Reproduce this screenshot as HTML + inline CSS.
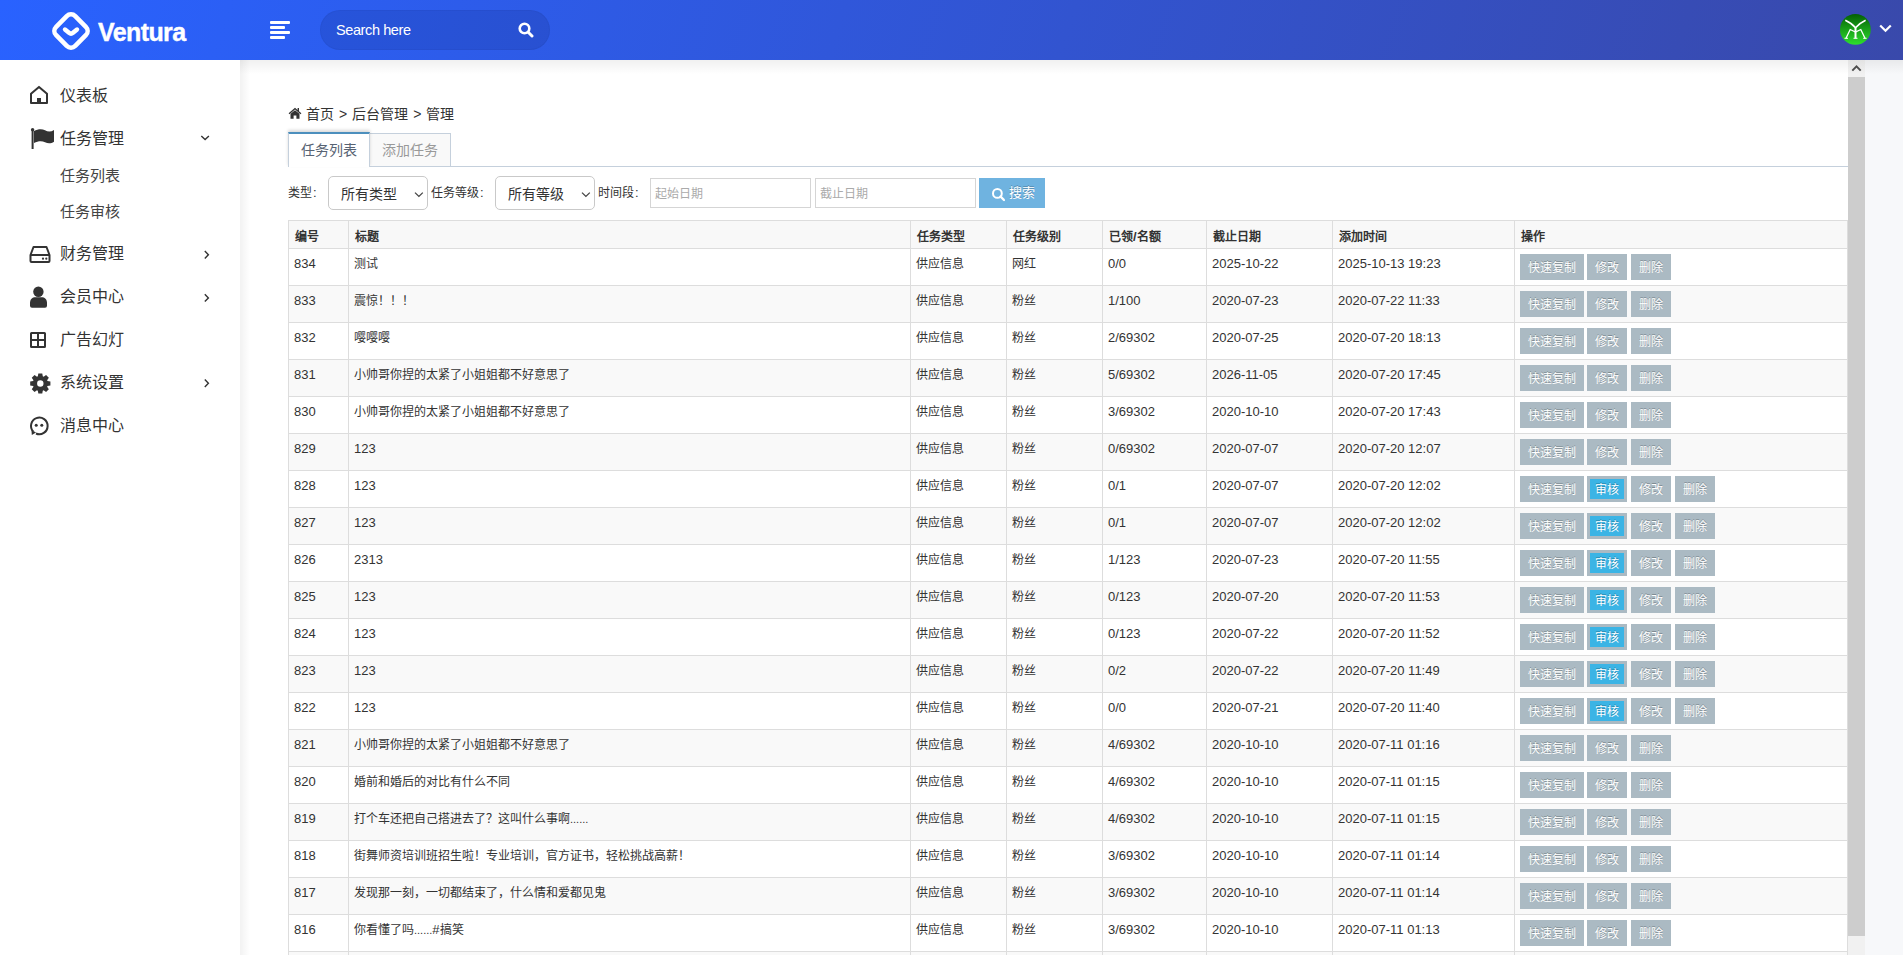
<!DOCTYPE html>
<html lang="zh-CN"><head><meta charset="utf-8"><title>Ventura</title>
<style>
*{margin:0;padding:0;box-sizing:content-box}
html,body{width:1903px;height:955px;overflow:hidden}
body{position:relative;font-family:"Liberation Sans",sans-serif;background:#f7f8fa;color:#333}
.c{font-size:12px}
.header{position:absolute;left:0;top:0;width:1903px;height:60px;background:linear-gradient(108deg,#2962ff 0%,#3949ab 100%);z-index:5}
.hshadow{position:absolute;left:240px;top:60px;width:1663px;height:14px;background:linear-gradient(180deg,rgba(0,0,0,.06),rgba(0,0,0,0));z-index:4}
.sidebar{position:absolute;left:0;top:60px;width:240px;height:895px;background:#fff;z-index:3}
.sshadow{position:absolute;left:240px;top:60px;width:10px;height:895px;background:linear-gradient(90deg,rgba(0,0,0,.05),rgba(0,0,0,0));z-index:4}
.frame{position:absolute;left:240px;top:60px;width:1608px;height:895px;background:#fff;overflow:hidden;z-index:1}
.sb{position:absolute;left:1848px;top:60px;width:17px;height:895px;background:#f1f1f1;z-index:2}
.sbthumb{position:absolute;left:0;top:17px;width:17px;height:859px;background:#cdcdcd}
.sbup{position:absolute;left:0;top:0;width:17px;height:17px}
.logo{position:absolute;left:52px;top:12px}
.brand{position:absolute;left:98px;top:20px;font-size:25px;line-height:25px;font-weight:bold;color:#fff;letter-spacing:-0.6px;-webkit-text-stroke:0.4px #fff}
.ham{position:absolute;left:270px;top:21px;width:20px;height:18px}
.ham i{position:absolute;left:0;height:3px;background:#fff;border-radius:1px}
.search{position:absolute;left:320px;top:10px;width:230px;height:40px;border-radius:20px;background:rgba(0,0,30,.10);box-shadow:inset 0 0 0 1px rgba(0,0,40,.04)}
.search span{position:absolute;left:16px;top:12px;font-size:14.5px;line-height:17px;letter-spacing:-0.4px;color:#fff}
.avatar{position:absolute;left:1840px;top:14px;width:31px;height:31px;border-radius:50%;background:linear-gradient(180deg,#056305,#2bd92b)}
.nav{position:absolute;left:60px;font-size:16px;color:#333;line-height:20px}
.sub{position:absolute;left:60px;font-size:15px;color:#444;line-height:20px}
.ico{position:absolute;left:30px}
.crumb{position:absolute;left:66px;top:44px;font-size:14px;color:#333;line-height:20px}
.tab{position:absolute;height:33px;font-size:14px;line-height:33px;text-align:center;box-sizing:border-box}
.tline{position:absolute;left:48px;top:106px;width:1560px;height:1px;background:#c5d0dc}
.lbl{position:absolute;font-size:12px;color:#333;line-height:20px}
.sel{position:absolute;top:116px;height:32px;border:1px solid #c9c9c9;border-radius:5px;background:#fff}
.sel span{position:absolute;left:12px;top:7px;font-size:14px;color:#333;line-height:20px}
.inp{position:absolute;top:118px;height:28px;border:1px solid #d5d5d5;background:#fff}
.inp span{position:absolute;left:4px;top:5px;font-size:12px;color:#aaa;line-height:20px}
.sbtn{text-shadow:0 -1px 0 rgba(0,0,0,.25);position:absolute;left:739px;top:118px;width:66px;height:30px;background:#6fb3e0;color:#fff}
.tbl{position:absolute}
.hdr{position:absolute;left:0;background:#f8f8f8;border-top:1px solid #ddd;box-sizing:border-box}
.hl{position:absolute;left:0;border-top:1px solid #ddd;border-bottom:1px solid #ddd;box-sizing:border-box}
.vl{position:absolute;top:0;width:1px;background:#ddd}
.th{position:absolute;font-weight:bold;font-size:13px;line-height:28px;color:#333;white-space:nowrap}
.td{position:absolute;font-size:13px;line-height:20px;padding-top:6px;color:#333;white-space:nowrap}
.btn{text-shadow:0 -1px 0 rgba(0,0,0,.25);position:absolute;height:19px;padding-top:1px;line-height:20px;border:3px solid #abbac3;background:#abbac3;color:#fff;font-size:12px;text-align:center}
.btn.b2{background:#3bb4e5}
.col{font-size:13px;margin-left:1px}
.gt{margin:0 5px 0 5px}
.el{font-size:11px}

</style></head><body>
<div class="header">
  <svg class="logo" width="38" height="38" viewBox="0 0 38 38"><rect x="5.5" y="5.5" width="27" height="27" rx="6" transform="rotate(45 19 19)" fill="none" stroke="#fff" stroke-width="4.6"/><path d="M13 17.5 L17 20.8 Q19 22.5 21 20.8 L25 17.5" fill="none" stroke="#fff" stroke-width="4.4" stroke-linecap="round" stroke-linejoin="round"/></svg>
  <div class="brand">Ventura</div>
  <div class="ham"><i style="top:0;width:20px"></i><i style="top:5px;width:15px"></i><i style="top:10px;width:20px"></i><i style="top:15px;width:15px"></i></div>
  <div class="search"><span>Search here</span>
    <svg style="position:absolute;left:198px;top:12px" width="16" height="16" viewBox="0 0 16 16"><circle cx="6.5" cy="6.5" r="4.8" fill="none" stroke="#fff" stroke-width="2.6"/><path d="M10 10 L14 14" stroke="#fff" stroke-width="3" stroke-linecap="round"/></svg>
  </div>
  <svg style="position:absolute;left:1838px;top:12px" width="36" height="36" viewBox="1838 12 36 36"><defs><linearGradient id="ag" x1="0" y1="0" x2="0" y2="1"><stop offset="0" stop-color="#046004"/><stop offset="1" stop-color="#2ee02e"/></linearGradient></defs><circle cx="1855.4" cy="29.4" r="15.4" fill="url(#ag)"/><g fill="none" stroke="#fff" stroke-width="1.6" stroke-linecap="butt"><path d="M1845.3 20.3 Q1852 23.5 1855.5 27.8 Q1859 23.5 1865.6 20.3"/><path d="M1855.5 27.3 V38.3" stroke-width="2"/><path d="M1846 38.2 L1850.2 29.5 L1855.5 32 L1860.8 29.5 L1865 38.2" stroke-width="1.3"/><path d="M1844.5 38.3 H1848 M1853.5 38.3 H1857.5 M1863.2 38.3 H1866.6" stroke-width="1"/></g></svg>
  <svg style="position:absolute;left:1879px;top:24px" width="13" height="9" viewBox="0 0 13 9"><path d="M1.2 1.5 L6.5 6.8 L11.8 1.5" fill="none" stroke="#fff" stroke-width="2.2"/></svg>
</div>
<div class="sidebar">
  <svg style="position:absolute;left:0;top:0" width="240" height="500" viewBox="0 60 240 500">
    <g fill="none" stroke="#333" stroke-width="2" stroke-linejoin="round">
      <path d="M31 93.8 L39 86.9 L47 93.8 V103 H31 Z"/>
      <path d="M33.5 247 H46.5 L49.5 255 V261 Q49.5 262 48.5 262 H31.5 Q30.5 262 30.5 261 V255 Z"/>
      <path d="M30.5 255 H49.5"/>
      <rect x="31" y="333" width="14" height="14" rx="0.5"/>
      <path d="M38 333 V347 M31 340 H45"/>
      <path d="M33.2 431.5 A8.3 8.3 0 1 1 36 433.5"/>
    </g>
    <g fill="#333">
      <rect x="37" y="98" width="4" height="5"/>
      <rect x="31.6" y="129.5" width="2" height="19.5"/>
      <circle cx="32.6" cy="129.8" r="1.7"/>
      <path d="M34 131 C38 129, 42 128.8, 45 130.3 C48 132, 51 132, 54 130 L54 141.8 C51 143.8, 48 143.8, 45 142.3 C42 140.8, 38 141, 34 143 Z"/>
      <circle cx="43" cy="258.7" r="1.1"/><circle cx="46.3" cy="258.7" r="1.1"/>
      <circle cx="38.4" cy="291.8" r="5.2"/>
      <path d="M30 303 C30 299.2 32.3 297.2 35.5 297.2 H41.5 C44.7 297.2 47 299.2 47 303 V305.8 Q47 307.8 45 307.8 H32 Q30 307.8 30 305.8 Z"/>
      <circle cx="36.2" cy="425.3" r="1.5"/><circle cx="41.8" cy="425.3" r="1.5"/>
      <path d="M31.5 430 L31.8 435 L36 432.5 Z"/>
    </g>
    <g transform="translate(40.3 383.5)" fill="#333">
      <path fill-rule="evenodd" d="M-2.47 -7.19 L-1.97 -10.11 L1.97 -10.11 L2.47 -7.19 L3.33 -6.83 L5.76 -8.54 L8.54 -5.76 L6.83 -3.33 L7.19 -2.47 L10.11 -1.97 L10.11 1.97 L7.19 2.47 L6.83 3.33 L8.54 5.76 L5.76 8.54 L3.33 6.83 L2.47 7.19 L1.97 10.11 L-1.97 10.11 L-2.47 7.19 L-3.33 6.83 L-5.76 8.54 L-8.54 5.76 L-6.83 3.33 L-7.19 2.47 L-10.11 1.97 L-10.11 -1.97 L-7.19 -2.47 L-6.83 -3.33 L-8.54 -5.76 L-5.76 -8.54 L-3.33 -6.83 Z M3.2 0 A3.2 3.2 0 1 0 -3.2 0 A3.2 3.2 0 1 0 3.2 0 Z"/>
    </g>
    <g fill="none" stroke="#333" stroke-width="1.4">
      <path d="M201.3 136 L205.1 139.6 L208.9 136"/>
      <path d="M204.8 251 L208.4 254.7 L204.8 258.4"/>
      <path d="M204.8 294.2 L208.4 297.9 L204.8 301.6"/>
      <path d="M204.8 379.6 L208.4 383.3 L204.8 387"/>
    </g>
  </svg>

  <div class="nav" style="top:26px">仪表板</div>
  <div class="nav" style="top:69px">任务管理</div>
  <div class="sub" style="top:106px">任务列表</div>
  <div class="sub" style="top:142px">任务审核</div>
  <div class="nav" style="top:184px">财务管理</div>
  <div class="nav" style="top:227px">会员中心</div>
  <div class="nav" style="top:270px">广告幻灯</div>
  <div class="nav" style="top:313px">系统设置</div>
  <div class="nav" style="top:356px">消息中心</div>
</div>
<div class="sshadow"></div>
<div class="hshadow"></div>
<div class="frame">
  <svg style="position:absolute;left:48px;top:47px" width="14" height="12" viewBox="0 0 14 12"><path d="M7 0.8 L0.6 6.2 L1.5 7.2 L7 2.6 L12.5 7.2 L13.4 6.2 L11 4.2 V1 H9.6 V3 Z" fill="#333"/><path d="M2.5 6.8 L7 3.2 L11.5 6.8 V11.8 H8.4 V8.6 H5.6 V11.8 H2.5 Z" fill="#333"/></svg><div class="crumb">首页<span class="gt">&gt;</span>后台管理<span class="gt">&gt;</span>管理</div>
  <div class="tline"></div>
  <div class="tab" style="left:48px;top:72px;width:82px;border:1px solid #c5d0dc;border-top:2px solid #4c8fbd;border-bottom:0;background:#fff;color:#576373;height:35px;box-shadow:0 -2px 3px 0 rgba(0,0,0,.15);z-index:2">任务列表</div>
  <div class="tab" style="left:129px;top:73px;width:82px;border:1px solid #c5d0dc;border-bottom:0;background:#f9f9f9;color:#999">添加任务</div>
  <div class="lbl" style="left:48px;top:123px">类型<span class="col">:</span></div>
  <div class="sel" style="left:88px;width:98px"><span>所有类型</span><svg style="position:absolute;left:85px;top:14px" width="10" height="8" viewBox="0 0 10 8"><path d="M1 1.6 L4.9 5.4 L8.8 1.6" fill="none" stroke="#444" stroke-width="1.3"/></svg></div>
  <div class="lbl" style="left:191px;top:123px">任务等级<span class="col">:</span></div>
  <div class="sel" style="left:255px;width:98px"><span>所有等级</span><svg style="position:absolute;left:85px;top:14px" width="10" height="8" viewBox="0 0 10 8"><path d="M1 1.6 L4.9 5.4 L8.8 1.6" fill="none" stroke="#444" stroke-width="1.3"/></svg></div>
  <div class="lbl" style="left:358px;top:123px">时间段<span class="col">:</span></div>
  <div class="inp" style="left:410px;width:159px"><span>起始日期</span></div>
  <div class="inp" style="left:575px;width:159px"><span>截止日期</span></div>
  <div class="sbtn"><svg style="position:absolute;left:10px;top:8px" width="16" height="16" viewBox="0 0 16 16"><circle cx="8.4" cy="7.4" r="4.4" fill="none" stroke="#fff" stroke-width="2"/><path d="M11.5 10.5 L15 14" stroke="#fff" stroke-width="2.4" stroke-linecap="round"/></svg><span style="position:absolute;left:30px;top:5px;font-size:13px;line-height:20px">搜索</span></div>
  <div class="tbl" style="left:48px;top:160px;width:1560px;">
<div class="hdr" style="top:0;height:29px;width:1560px"></div>
<div class="hl" style="top:28px;width:1560px;height:38px;background:#fff"></div>
<div class="hl" style="top:65px;width:1560px;height:38px;background:#f9f9f9"></div>
<div class="hl" style="top:102px;width:1560px;height:38px;background:#fff"></div>
<div class="hl" style="top:139px;width:1560px;height:38px;background:#f9f9f9"></div>
<div class="hl" style="top:176px;width:1560px;height:38px;background:#fff"></div>
<div class="hl" style="top:213px;width:1560px;height:38px;background:#f9f9f9"></div>
<div class="hl" style="top:250px;width:1560px;height:38px;background:#fff"></div>
<div class="hl" style="top:287px;width:1560px;height:38px;background:#f9f9f9"></div>
<div class="hl" style="top:324px;width:1560px;height:38px;background:#fff"></div>
<div class="hl" style="top:361px;width:1560px;height:38px;background:#f9f9f9"></div>
<div class="hl" style="top:398px;width:1560px;height:38px;background:#fff"></div>
<div class="hl" style="top:435px;width:1560px;height:38px;background:#f9f9f9"></div>
<div class="hl" style="top:472px;width:1560px;height:38px;background:#fff"></div>
<div class="hl" style="top:509px;width:1560px;height:38px;background:#f9f9f9"></div>
<div class="hl" style="top:546px;width:1560px;height:38px;background:#fff"></div>
<div class="hl" style="top:583px;width:1560px;height:38px;background:#f9f9f9"></div>
<div class="hl" style="top:620px;width:1560px;height:38px;background:#fff"></div>
<div class="hl" style="top:657px;width:1560px;height:38px;background:#f9f9f9"></div>
<div class="hl" style="top:694px;width:1560px;height:38px;background:#fff"></div>
<div class="hl" style="top:731px;width:1560px;height:38px;background:#f9f9f9"></div>
<div class="vl" style="left:0px;height:769px"></div>
<div class="vl" style="left:60px;height:769px"></div>
<div class="vl" style="left:622px;height:769px"></div>
<div class="vl" style="left:718px;height:769px"></div>
<div class="vl" style="left:814px;height:769px"></div>
<div class="vl" style="left:918px;height:769px"></div>
<div class="vl" style="left:1044px;height:769px"></div>
<div class="vl" style="left:1226px;height:769px"></div>
<div class="vl" style="left:1559px;height:769px"></div>
<div class="th" style="left:7px;top:3px"><span class="c">编号</span></div>
<div class="th" style="left:67px;top:3px"><span class="c">标题</span></div>
<div class="th" style="left:629px;top:3px"><span class="c">任务类型</span></div>
<div class="th" style="left:725px;top:3px"><span class="c">任务级别</span></div>
<div class="th" style="left:821px;top:3px"><span class="c">已领</span>/<span class="c">名额</span></div>
<div class="th" style="left:925px;top:3px"><span class="c">截止日期</span></div>
<div class="th" style="left:1051px;top:3px"><span class="c">添加时间</span></div>
<div class="th" style="left:1233px;top:3px"><span class="c">操作</span></div>
<div class="td" style="left:6px;top:28px">834</div>
<div class="td" style="left:66px;top:28px"><span class="c">测试</span></div>
<div class="td" style="left:628px;top:28px"><span class="c">供应信息</span></div>
<div class="td" style="left:724px;top:28px"><span class="c">网红</span></div>
<div class="td" style="left:820px;top:28px">0/0</div>
<div class="td" style="left:924px;top:28px">2025-10-22</div>
<div class="td" style="left:1050px;top:28px">2025-10-13 19:23</div>
<div class="btn" style="left:1232px;top:34px;width:58px">快速复制</div>
<div class="btn" style="left:1299px;top:34px;width:34px">修改</div>
<div class="btn" style="left:1343px;top:34px;width:34px">删除</div>
<div class="td" style="left:6px;top:65px">833</div>
<div class="td" style="left:66px;top:65px"><span class="c">震惊！！！</span></div>
<div class="td" style="left:628px;top:65px"><span class="c">供应信息</span></div>
<div class="td" style="left:724px;top:65px"><span class="c">粉丝</span></div>
<div class="td" style="left:820px;top:65px">1/100</div>
<div class="td" style="left:924px;top:65px">2020-07-23</div>
<div class="td" style="left:1050px;top:65px">2020-07-22 11:33</div>
<div class="btn" style="left:1232px;top:71px;width:58px">快速复制</div>
<div class="btn" style="left:1299px;top:71px;width:34px">修改</div>
<div class="btn" style="left:1343px;top:71px;width:34px">删除</div>
<div class="td" style="left:6px;top:102px">832</div>
<div class="td" style="left:66px;top:102px"><span class="c">嘤嘤嘤</span></div>
<div class="td" style="left:628px;top:102px"><span class="c">供应信息</span></div>
<div class="td" style="left:724px;top:102px"><span class="c">粉丝</span></div>
<div class="td" style="left:820px;top:102px">2/69302</div>
<div class="td" style="left:924px;top:102px">2020-07-25</div>
<div class="td" style="left:1050px;top:102px">2020-07-20 18:13</div>
<div class="btn" style="left:1232px;top:108px;width:58px">快速复制</div>
<div class="btn" style="left:1299px;top:108px;width:34px">修改</div>
<div class="btn" style="left:1343px;top:108px;width:34px">删除</div>
<div class="td" style="left:6px;top:139px">831</div>
<div class="td" style="left:66px;top:139px"><span class="c">小帅哥你捏的太紧了小姐姐都不好意思了</span></div>
<div class="td" style="left:628px;top:139px"><span class="c">供应信息</span></div>
<div class="td" style="left:724px;top:139px"><span class="c">粉丝</span></div>
<div class="td" style="left:820px;top:139px">5/69302</div>
<div class="td" style="left:924px;top:139px">2026-11-05</div>
<div class="td" style="left:1050px;top:139px">2020-07-20 17:45</div>
<div class="btn" style="left:1232px;top:145px;width:58px">快速复制</div>
<div class="btn" style="left:1299px;top:145px;width:34px">修改</div>
<div class="btn" style="left:1343px;top:145px;width:34px">删除</div>
<div class="td" style="left:6px;top:176px">830</div>
<div class="td" style="left:66px;top:176px"><span class="c">小帅哥你捏的太紧了小姐姐都不好意思了</span></div>
<div class="td" style="left:628px;top:176px"><span class="c">供应信息</span></div>
<div class="td" style="left:724px;top:176px"><span class="c">粉丝</span></div>
<div class="td" style="left:820px;top:176px">3/69302</div>
<div class="td" style="left:924px;top:176px">2020-10-10</div>
<div class="td" style="left:1050px;top:176px">2020-07-20 17:43</div>
<div class="btn" style="left:1232px;top:182px;width:58px">快速复制</div>
<div class="btn" style="left:1299px;top:182px;width:34px">修改</div>
<div class="btn" style="left:1343px;top:182px;width:34px">删除</div>
<div class="td" style="left:6px;top:213px">829</div>
<div class="td" style="left:66px;top:213px">123</div>
<div class="td" style="left:628px;top:213px"><span class="c">供应信息</span></div>
<div class="td" style="left:724px;top:213px"><span class="c">粉丝</span></div>
<div class="td" style="left:820px;top:213px">0/69302</div>
<div class="td" style="left:924px;top:213px">2020-07-07</div>
<div class="td" style="left:1050px;top:213px">2020-07-20 12:07</div>
<div class="btn" style="left:1232px;top:219px;width:58px">快速复制</div>
<div class="btn" style="left:1299px;top:219px;width:34px">修改</div>
<div class="btn" style="left:1343px;top:219px;width:34px">删除</div>
<div class="td" style="left:6px;top:250px">828</div>
<div class="td" style="left:66px;top:250px">123</div>
<div class="td" style="left:628px;top:250px"><span class="c">供应信息</span></div>
<div class="td" style="left:724px;top:250px"><span class="c">粉丝</span></div>
<div class="td" style="left:820px;top:250px">0/1</div>
<div class="td" style="left:924px;top:250px">2020-07-07</div>
<div class="td" style="left:1050px;top:250px">2020-07-20 12:02</div>
<div class="btn" style="left:1232px;top:256px;width:58px">快速复制</div>
<div class="btn b2" style="left:1299px;top:256px;width:34px">审核</div>
<div class="btn" style="left:1343px;top:256px;width:34px">修改</div>
<div class="btn" style="left:1387px;top:256px;width:34px">删除</div>
<div class="td" style="left:6px;top:287px">827</div>
<div class="td" style="left:66px;top:287px">123</div>
<div class="td" style="left:628px;top:287px"><span class="c">供应信息</span></div>
<div class="td" style="left:724px;top:287px"><span class="c">粉丝</span></div>
<div class="td" style="left:820px;top:287px">0/1</div>
<div class="td" style="left:924px;top:287px">2020-07-07</div>
<div class="td" style="left:1050px;top:287px">2020-07-20 12:02</div>
<div class="btn" style="left:1232px;top:293px;width:58px">快速复制</div>
<div class="btn b2" style="left:1299px;top:293px;width:34px">审核</div>
<div class="btn" style="left:1343px;top:293px;width:34px">修改</div>
<div class="btn" style="left:1387px;top:293px;width:34px">删除</div>
<div class="td" style="left:6px;top:324px">826</div>
<div class="td" style="left:66px;top:324px">2313</div>
<div class="td" style="left:628px;top:324px"><span class="c">供应信息</span></div>
<div class="td" style="left:724px;top:324px"><span class="c">粉丝</span></div>
<div class="td" style="left:820px;top:324px">1/123</div>
<div class="td" style="left:924px;top:324px">2020-07-23</div>
<div class="td" style="left:1050px;top:324px">2020-07-20 11:55</div>
<div class="btn" style="left:1232px;top:330px;width:58px">快速复制</div>
<div class="btn b2" style="left:1299px;top:330px;width:34px">审核</div>
<div class="btn" style="left:1343px;top:330px;width:34px">修改</div>
<div class="btn" style="left:1387px;top:330px;width:34px">删除</div>
<div class="td" style="left:6px;top:361px">825</div>
<div class="td" style="left:66px;top:361px">123</div>
<div class="td" style="left:628px;top:361px"><span class="c">供应信息</span></div>
<div class="td" style="left:724px;top:361px"><span class="c">粉丝</span></div>
<div class="td" style="left:820px;top:361px">0/123</div>
<div class="td" style="left:924px;top:361px">2020-07-20</div>
<div class="td" style="left:1050px;top:361px">2020-07-20 11:53</div>
<div class="btn" style="left:1232px;top:367px;width:58px">快速复制</div>
<div class="btn b2" style="left:1299px;top:367px;width:34px">审核</div>
<div class="btn" style="left:1343px;top:367px;width:34px">修改</div>
<div class="btn" style="left:1387px;top:367px;width:34px">删除</div>
<div class="td" style="left:6px;top:398px">824</div>
<div class="td" style="left:66px;top:398px">123</div>
<div class="td" style="left:628px;top:398px"><span class="c">供应信息</span></div>
<div class="td" style="left:724px;top:398px"><span class="c">粉丝</span></div>
<div class="td" style="left:820px;top:398px">0/123</div>
<div class="td" style="left:924px;top:398px">2020-07-22</div>
<div class="td" style="left:1050px;top:398px">2020-07-20 11:52</div>
<div class="btn" style="left:1232px;top:404px;width:58px">快速复制</div>
<div class="btn b2" style="left:1299px;top:404px;width:34px">审核</div>
<div class="btn" style="left:1343px;top:404px;width:34px">修改</div>
<div class="btn" style="left:1387px;top:404px;width:34px">删除</div>
<div class="td" style="left:6px;top:435px">823</div>
<div class="td" style="left:66px;top:435px">123</div>
<div class="td" style="left:628px;top:435px"><span class="c">供应信息</span></div>
<div class="td" style="left:724px;top:435px"><span class="c">粉丝</span></div>
<div class="td" style="left:820px;top:435px">0/2</div>
<div class="td" style="left:924px;top:435px">2020-07-22</div>
<div class="td" style="left:1050px;top:435px">2020-07-20 11:49</div>
<div class="btn" style="left:1232px;top:441px;width:58px">快速复制</div>
<div class="btn b2" style="left:1299px;top:441px;width:34px">审核</div>
<div class="btn" style="left:1343px;top:441px;width:34px">修改</div>
<div class="btn" style="left:1387px;top:441px;width:34px">删除</div>
<div class="td" style="left:6px;top:472px">822</div>
<div class="td" style="left:66px;top:472px">123</div>
<div class="td" style="left:628px;top:472px"><span class="c">供应信息</span></div>
<div class="td" style="left:724px;top:472px"><span class="c">粉丝</span></div>
<div class="td" style="left:820px;top:472px">0/0</div>
<div class="td" style="left:924px;top:472px">2020-07-21</div>
<div class="td" style="left:1050px;top:472px">2020-07-20 11:40</div>
<div class="btn" style="left:1232px;top:478px;width:58px">快速复制</div>
<div class="btn b2" style="left:1299px;top:478px;width:34px">审核</div>
<div class="btn" style="left:1343px;top:478px;width:34px">修改</div>
<div class="btn" style="left:1387px;top:478px;width:34px">删除</div>
<div class="td" style="left:6px;top:509px">821</div>
<div class="td" style="left:66px;top:509px"><span class="c">小帅哥你捏的太紧了小姐姐都不好意思了</span></div>
<div class="td" style="left:628px;top:509px"><span class="c">供应信息</span></div>
<div class="td" style="left:724px;top:509px"><span class="c">粉丝</span></div>
<div class="td" style="left:820px;top:509px">4/69302</div>
<div class="td" style="left:924px;top:509px">2020-10-10</div>
<div class="td" style="left:1050px;top:509px">2020-07-11 01:16</div>
<div class="btn" style="left:1232px;top:515px;width:58px">快速复制</div>
<div class="btn" style="left:1299px;top:515px;width:34px">修改</div>
<div class="btn" style="left:1343px;top:515px;width:34px">删除</div>
<div class="td" style="left:6px;top:546px">820</div>
<div class="td" style="left:66px;top:546px"><span class="c">婚前和婚后的对比有什么不同</span></div>
<div class="td" style="left:628px;top:546px"><span class="c">供应信息</span></div>
<div class="td" style="left:724px;top:546px"><span class="c">粉丝</span></div>
<div class="td" style="left:820px;top:546px">4/69302</div>
<div class="td" style="left:924px;top:546px">2020-10-10</div>
<div class="td" style="left:1050px;top:546px">2020-07-11 01:15</div>
<div class="btn" style="left:1232px;top:552px;width:58px">快速复制</div>
<div class="btn" style="left:1299px;top:552px;width:34px">修改</div>
<div class="btn" style="left:1343px;top:552px;width:34px">删除</div>
<div class="td" style="left:6px;top:583px">819</div>
<div class="td" style="left:66px;top:583px"><span class="c">打个车还把自己搭进去了？这叫什么事啊</span><span class="el">......</span></div>
<div class="td" style="left:628px;top:583px"><span class="c">供应信息</span></div>
<div class="td" style="left:724px;top:583px"><span class="c">粉丝</span></div>
<div class="td" style="left:820px;top:583px">4/69302</div>
<div class="td" style="left:924px;top:583px">2020-10-10</div>
<div class="td" style="left:1050px;top:583px">2020-07-11 01:15</div>
<div class="btn" style="left:1232px;top:589px;width:58px">快速复制</div>
<div class="btn" style="left:1299px;top:589px;width:34px">修改</div>
<div class="btn" style="left:1343px;top:589px;width:34px">删除</div>
<div class="td" style="left:6px;top:620px">818</div>
<div class="td" style="left:66px;top:620px"><span class="c">街舞师资培训班招生啦！专业培训，官方证书，轻松挑战高薪！</span></div>
<div class="td" style="left:628px;top:620px"><span class="c">供应信息</span></div>
<div class="td" style="left:724px;top:620px"><span class="c">粉丝</span></div>
<div class="td" style="left:820px;top:620px">3/69302</div>
<div class="td" style="left:924px;top:620px">2020-10-10</div>
<div class="td" style="left:1050px;top:620px">2020-07-11 01:14</div>
<div class="btn" style="left:1232px;top:626px;width:58px">快速复制</div>
<div class="btn" style="left:1299px;top:626px;width:34px">修改</div>
<div class="btn" style="left:1343px;top:626px;width:34px">删除</div>
<div class="td" style="left:6px;top:657px">817</div>
<div class="td" style="left:66px;top:657px"><span class="c">发现那一刻，一切都结束了，什么情和爱都见鬼</span></div>
<div class="td" style="left:628px;top:657px"><span class="c">供应信息</span></div>
<div class="td" style="left:724px;top:657px"><span class="c">粉丝</span></div>
<div class="td" style="left:820px;top:657px">3/69302</div>
<div class="td" style="left:924px;top:657px">2020-10-10</div>
<div class="td" style="left:1050px;top:657px">2020-07-11 01:14</div>
<div class="btn" style="left:1232px;top:663px;width:58px">快速复制</div>
<div class="btn" style="left:1299px;top:663px;width:34px">修改</div>
<div class="btn" style="left:1343px;top:663px;width:34px">删除</div>
<div class="td" style="left:6px;top:694px">816</div>
<div class="td" style="left:66px;top:694px"><span class="c">你看懂了吗</span><span class="el">......</span>#<span class="c">搞笑</span></div>
<div class="td" style="left:628px;top:694px"><span class="c">供应信息</span></div>
<div class="td" style="left:724px;top:694px"><span class="c">粉丝</span></div>
<div class="td" style="left:820px;top:694px">3/69302</div>
<div class="td" style="left:924px;top:694px">2020-10-10</div>
<div class="td" style="left:1050px;top:694px">2020-07-11 01:13</div>
<div class="btn" style="left:1232px;top:700px;width:58px">快速复制</div>
<div class="btn" style="left:1299px;top:700px;width:34px">修改</div>
<div class="btn" style="left:1343px;top:700px;width:34px">删除</div>
<div class="td" style="left:6px;top:731px">815</div>
</div>
</div>
<div class="sb"><div class="sbup"><svg width="17" height="17" viewBox="0 0 17 17"><path d="M4.3 10.6 L8.5 6.4 L12.7 10.6" fill="none" stroke="#505050" stroke-width="2"/></svg></div><div class="sbthumb"></div></div>

</body></html>
